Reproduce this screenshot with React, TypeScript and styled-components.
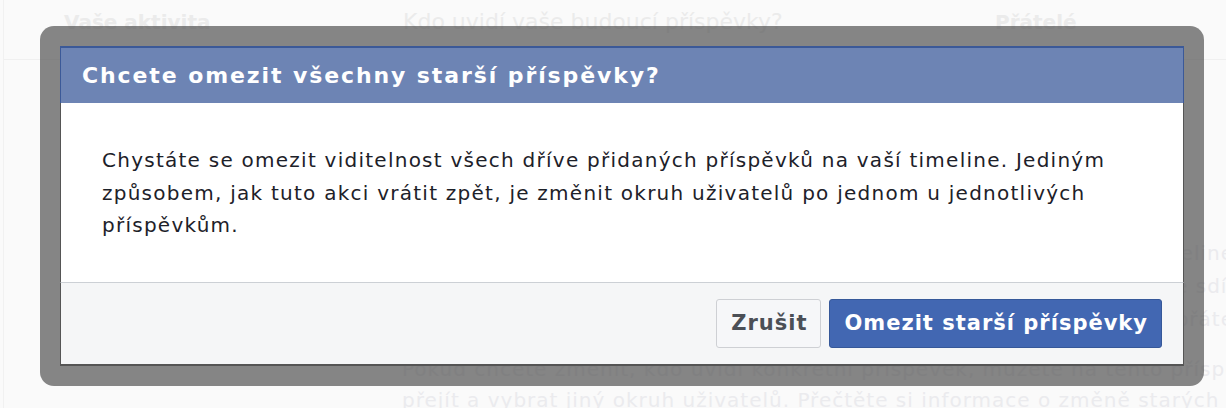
import React from "react";
import styled, { createGlobalStyle } from "styled-components";

const GlobalStyle = createGlobalStyle`
  html, body {
    margin: 0;
    padding: 0;
    background: #fafafa;
  }
  body {
    font-family: "DejaVu Sans", "Liberation Sans", sans-serif;
  }
`;

const Page = styled.div`
  position: relative;
  width: 1226px;
  height: 408px;
  overflow: hidden;
  background: #fafafa;
`;

const Sheet = styled.div`
  margin-left: 3px;
  height: 100%;
  border-left: 1px solid #f1f1f1;
  color: #ebebeb;
`;

const HeadRow = styled.div`
  display: grid;
  grid-template-columns: 339px 592px 1fr;
  align-items: center;
  height: 24px;
  padding: 10px 0 25px 60px;
  border-bottom: 1px solid #f0f0f0;
`;

const HeadCell = styled.div<{ $bold?: boolean }>`
  font-size: ${(p) => (p.$bold ? 20 : 22)}px;
  font-weight: ${(p) => (p.$bold ? 700 : 400)};
  line-height: 24px;
  white-space: nowrap;
`;

const Para = styled.div<{ $lh: number; $top: number }>`
  margin: ${(p) => p.$top}px 0 0 398px;
  width: 832px;
  font-size: 20px;
  letter-spacing: 1px;
  line-height: ${(p) => p.$lh}px;
  color: #ebebee;
`;

const Line = styled.div`
  white-space: nowrap;
  text-align: right;
`;

const LeftLine = styled.div`
  white-space: nowrap;
`;

const Frame = styled.div`
  position: absolute;
  left: 40px;
  top: 26px;
  width: 1124px;
  padding: 20px;
  background: rgba(82, 82, 82, 0.7);
  border-radius: 14px;
`;

const Dialog = styled.div`
  display: flex;
  flex-direction: column;
  background: #fff;
`;

const Header = styled.div`
  height: 55px;
  display: flex;
  align-items: center;
  padding: 0 21px;
  background: #6d84b4;
  border: 1px solid #3b5998;
  border-top-width: 2px;
  border-bottom: none;
  color: #fff;
  font-size: 22px;
  font-weight: 700;
  letter-spacing: 1.9px;
  white-space: nowrap;
`;

const Body = styled.div`
  padding: 41px 40px 40px 41px;
  border-left: 1px solid #555;
  border-right: 1px solid #555;
  font-size: 20px;
  letter-spacing: 1.25px;
  line-height: 32.5px;
  color: #1d2129;
`;

const Footer = styled.div`
  display: flex;
  justify-content: flex-end;
  gap: 8px;
  padding: 16px 21px 16px;
  background: #f5f6f7;
  border: 1px solid #555;
  border-top: 1px solid #ccd0d5;
  border-bottom-width: 2px;
`;

const Button = styled.button<{ $primary?: boolean }>`
  height: 49px;
  padding: 0 13px 0 14px;
  border-radius: 3px;
  border: 1px solid ${(p) => (p.$primary ? "#365899" : "#ced0d4")};
  background: ${(p) => (p.$primary ? "#4267b2" : "#f6f7f9")};
  color: ${(p) => (p.$primary ? "#fff" : "#4b4f56")};
  font-family: "DejaVu Sans", "Liberation Sans", sans-serif;
  font-size: 21px;
  font-weight: 700;
  letter-spacing: 1px;
  white-space: nowrap;
  cursor: pointer;
`;

export default function App() {
  return (
    <>
      <GlobalStyle />
      <Page>
        <Sheet>
          <HeadRow>
            <HeadCell $bold>Vaše aktivita</HeadCell>
            <HeadCell>Kdo uvidí vaše budoucí příspěvky?</HeadCell>
            <HeadCell $bold>Přátelé</HeadCell>
          </HeadRow>
          <Para $lh={33} $top={177}>
            <Line>Omezit okruh uživatelů pro příspěvky, které jste na své timeline</Line>
            <Line>dříve sdíleli s přáteli přátel nebo veřejně, a začít je sdíl</Line>
            <Line>Obsah ve vaší timeline, který jste sdíleli s přáte</Line>
          </Para>
          <Para $lh={31} $top={18}>
            <LeftLine>Pokud chcete změnit, kdo uvidí konkrétní příspěvek, můžete na tento příspěvek</LeftLine>
            <LeftLine>přejít a vybrat jiný okruh uživatelů. Přečtěte si informace o změně starých příspěvků.</LeftLine>
          </Para>
        </Sheet>
        <Frame>
          <Dialog>
            <Header>Chcete omezit všechny starší příspěvky?</Header>
            <Body>
              Chystáte se omezit viditelnost všech dříve přidaných příspěvků na vaší timeline. Jediným
              způsobem, jak tuto akci vrátit zpět, je změnit okruh uživatelů po jednom u jednotlivých
              příspěvkům.
            </Body>
            <Footer>
              <Button>Zrušit</Button>
              <Button $primary>Omezit starší příspěvky</Button>
            </Footer>
          </Dialog>
        </Frame>
      </Page>
    </>
  );
}
